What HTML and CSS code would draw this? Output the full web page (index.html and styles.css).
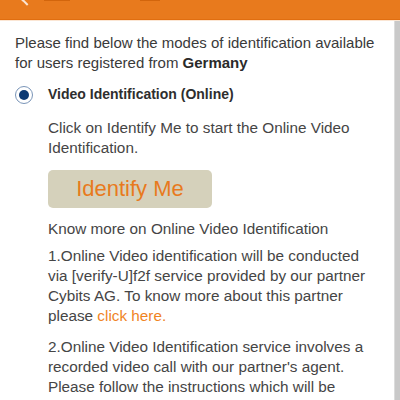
FILE: index.html
```html
<!DOCTYPE html>
<html>
<head>
<meta charset="utf-8">
<link rel="stylesheet" href="styles.css">
</head>
<body>
<div class="page">
  <header class="topbar">
    <span class="back"></span>
    <span class="mark mark-a"></span>
    <span class="mark mark-b"></span>
  </header>
  <div class="frame">
    <main class="content">
      <p class="intro">Please find below the modes of identification available for users registered from <b>Germany</b></p>
      <div class="option">
        <span class="radio"><span class="dot"></span></span>
        <span class="option-label">Video Identification (Online)</span>
      </div>
      <div class="details">
        <p class="text">Click on Identify Me to start the Online Video Identification.</p>
        <button class="identify">Identify Me</button>
        <p class="text know">Know more on Online Video Identification</p>
        <p class="text first">1.Online Video identification will be conducted via [verify-U]f2f service provided by our partner Cybits AG. To know more about this partner please <a class="link">click here.</a></p>
        <p class="text gap">2.Online Video Identification service involves a recorded video call with our partner's agent. Please follow the instructions which will be</p>
      </div>
    </main>
    <div class="scrollbar"></div>
  </div>
</div>
</body>
</html>
```

FILE: styles.css
```css
html, body {
  margin: 0;
  padding: 0;
  background: #ffffff;
  width: 400px;
  height: 400px;
  overflow: hidden;
}
.page {
  font-family: "Liberation Sans", Arial, sans-serif;
  color: #454545;
  display: flex;
  flex-direction: column;
  height: 400px;
}
.topbar {
  height: 19px;
  background: #e87a1d;
  border-bottom: 1px solid #e06e10;
  position: relative;
  flex: none;
}
.back {
  position: absolute;
  left: 23px;
  top: -4px;
  width: 6px;
  height: 6px;
  border-left: 2px solid #fff;
  border-bottom: 2px solid #fff;
  transform: rotate(45deg);
  opacity: 0.8;
}
.mark {
  position: absolute;
  top: 0;
  height: 1px;
  background: #d2650c;
}
.mark-a { left: 44px; width: 26px; }
.mark-b { left: 140px; width: 20px; }
.frame {
  flex: 1;
  display: flex;
  border-top: 1px solid #fbe6d4;
}
.content {
  flex: 1;
  padding: 12px 0 0 15px;
  line-height: 20px;
}
.scrollbar {
  width: 5px;
  background: #c9c9c9;
  border-left: 1px solid #dcdcdc;
  flex: none;
}
p { margin: 0; }
.intro {
  color: #3a3a3a;
  font-size: 15px;
  padding-right: 4px;
}
.intro b { color: #2a2a2a; }
.option {
  display: flex;
  align-items: center;
  gap: 15px;
  margin-top: 10px;
}
.radio {
  border: 1.5px solid #7a95b8;
  border-radius: 50%;
  display: flex;
  align-items: center;
  justify-content: center;
  box-sizing: border-box;
  width: 18px;
  height: 18px;
  margin-top: 3px;
}
.dot {
  width: 10px;
  height: 10px;
  border-radius: 50%;
  background: #0d3a74;
}
.option-label {
  font-weight: bold;
  font-size: 14px;
  color: #2e2e2e;
}
.details {
  padding-left: 33px;
  padding-right: 23px;
  margin-top: 14px;
  font-size: 15.3px;
}
.identify {
  display: block;
  margin-top: 12px;
  width: 164px;
  height: 38px;
  border: none;
  border-radius: 5px;
  background: #d5d1bb;
  color: #e87a1d;
  font-family: "Liberation Sans", Arial, sans-serif;
  font-size: 22px;
  padding: 0;
}
.know { margin-top: 11px; }
.first { margin-top: 7px; }
.gap { margin-top: 11px; }
.link { color: #f0841f; }
```
